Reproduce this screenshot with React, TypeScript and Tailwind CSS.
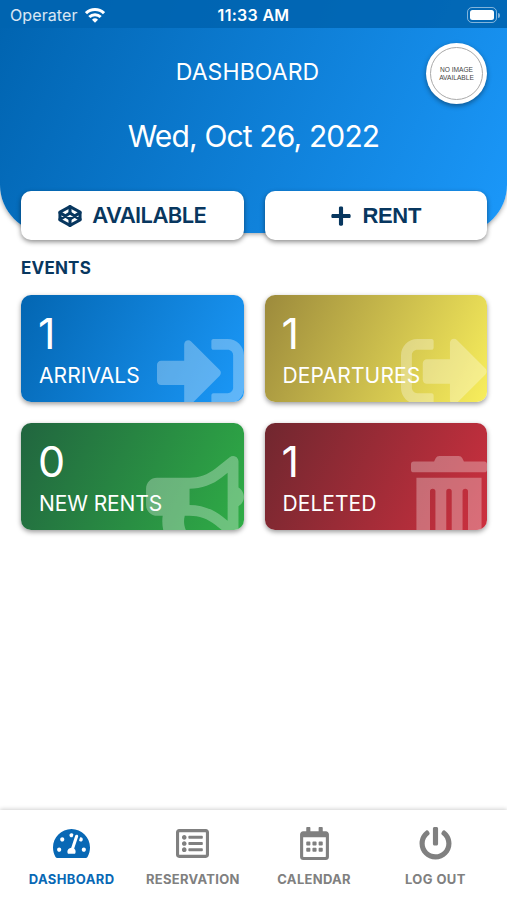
import type { IconType } from 'react-icons';
import {
  FaBullhorn,
  FaPlus,
  FaPowerOff,
  FaRegCalendarAlt,
  FaRegListAlt,
  FaSignInAlt,
  FaSignOutAlt,
  FaTachometerAlt,
  FaTrashAlt,
} from 'react-icons/fa';

interface EventCard {
  label: string;
  count: number;
  icon: IconType;
  iconClass: string;
  gradient: string;
  labelClass: string;
}

interface Tab {
  label: string;
  icon: IconType;
  iconClass: string;
  labelClass: string;
  active?: boolean;
}

const events: EventCard[] = [
  {
    label: 'ARRIVALS',
    count: 1,
    icon: FaSignInAlt,
    iconClass: 'w-[87px]',
    gradient: 'from-[#0366b2] to-[#1b98f8]',
    labelClass: 'tracking-[0.1px]',
  },
  {
    label: 'DEPARTURES',
    count: 1,
    icon: FaSignOutAlt,
    iconClass: 'w-[87px] translate-x-px',
    gradient: 'from-[#9c8a3c] to-[#f8ee5c]',
    labelClass: 'tracking-[0.15px]',
  },
  {
    label: 'NEW RENTS',
    count: 0,
    icon: FaBullhorn,
    iconClass: 'w-[98px]',
    gradient: 'from-[#21653f] to-[#2fad46]',
    labelClass: 'tracking-[-0.1px]',
  },
  {
    label: 'DELETED',
    count: 1,
    icon: FaTrashAlt,
    iconClass: 'w-[76px]',
    gradient: 'from-[#70272f] to-[#cd303f]',
    labelClass: 'tracking-[0.05px]',
  },
];

const tabs: Tab[] = [
  { label: 'DASHBOARD', icon: FaTachometerAlt, iconClass: 'h-[33px] w-[37px]', labelClass: 'tracking-[0.4px]', active: true },
  { label: 'RESERVATION', icon: FaRegListAlt, iconClass: 'size-[33px]', labelClass: 'tracking-[0.3px]' },
  { label: 'CALENDAR', icon: FaRegCalendarAlt, iconClass: 'size-[33px]', labelClass: 'tracking-[0.3px]' },
  { label: 'LOG OUT', icon: FaPowerOff, iconClass: 'size-[33px]', labelClass: 'tracking-[0.4px]' },
];

function CodepenIcon({ className }: { className?: string }) {
  return (
    <svg
      viewBox="0 0 24 24"
      className={className}
      fill="none"
      stroke="currentColor"
      strokeWidth="3.1"
      strokeLinecap="round"
      strokeLinejoin="round"
    >
      <path d="M12 2.6 22 8v8l-10 5.4L2 16V8Z" />
      <path d="M12 2.6v6M12 15.4v6" />
      <path d="m2 8.6 10 6.4 10-6.4M2 15.4 12 9l10 6.4" />
    </svg>
  );
}

function StatusBar() {
  return (
    <div className="grid h-7 grid-cols-3 items-center bg-[#0064b0]/90 pt-0.5 text-[16px] text-white">
      <div className="flex items-center gap-[7px] pl-[10px]">
        <span className="tracking-[0.1px] text-white/85">Operater</span>
        <svg viewBox="0 0 20 15" className="h-[15px] w-5" fill="none" stroke="white" strokeWidth="3">
          <path d="M1 5.2a12.8 12.8 0 0 1 18 0" />
          <path d="M4.3 9a8.1 8.1 0 0 1 11.4 0" />
          <path d="M10 14.8 7 11.8a4.3 4.3 0 0 1 6 0Z" fill="white" stroke="none" />
        </svg>
      </div>
      <span className="text-center font-semibold tracking-[0.3px] whitespace-nowrap">11:33 AM</span>
      <div className="flex items-center justify-end gap-px pr-[7px]">
        <div className="h-4 w-[30px] rounded-[5px] border border-white/50 p-[2px]">
          <div className="h-full rounded-[2.5px] bg-white" />
        </div>
        <div className="h-[5px] w-[2px] rounded-r bg-white/50" />
      </div>
    </div>
  );
}

function Header() {
  return (
    <header className="h-[233px] rounded-b-[48px] bg-linear-[115deg] from-[#0063af] to-[#1b98fa] shadow-[0_1px_5px_rgba(0,0,0,0.4)]">
      <StatusBar />
      <div className="grid grid-cols-[1fr_auto_1fr] items-center pt-[15px] pr-5">
        <h1 className="col-start-2 pb-[3px] pl-2 text-[23px] leading-8 tracking-[0.1px] text-white">DASHBOARD</h1>
        <div className="flex size-[61px] items-center justify-center justify-self-end rounded-full bg-white shadow-[0_2px_5px_rgba(0,0,0,0.4)]">
          <div className="flex size-[53px] items-center justify-center rounded-full border border-[#aaa] pt-px text-center font-['Liberation_Sans',sans-serif] text-[6.6px] leading-[8px] text-[#444]">
            NO IMAGE
            <br />
            AVAILABLE
          </div>
        </div>
      </div>
      <p className="mt-[12px] text-center text-[30px] leading-10 tracking-[-0.85px] text-white">Wed, Oct 26, 2022</p>
    </header>
  );
}

function Events() {
  return (
    <section className="pt-[19px] pr-5 pl-[21px]">
      <h2 className="text-[17px] leading-[18px] font-bold tracking-[0.2px] text-[#08375f]">EVENTS</h2>
      <div className="mt-[18px] grid grid-cols-2 gap-[21px]">
        {events.map(({ label, count, icon: Icon, iconClass, gradient, labelClass }) => (
          <div
            key={label}
            className={`relative h-[107px] rounded-[10px] bg-linear-[116deg] shadow-[0_2px_5px_rgba(0,0,0,0.4)] ${gradient}`}
          >
            <div className="absolute inset-0 overflow-hidden rounded-[10px]">
              <Icon className={`absolute top-[33px] right-0 h-[87px] text-white/30 ${iconClass}`} />
            </div>
            <div className="relative pt-[13px] pl-[18px] text-white">
              <div className="-ml-px text-[43px] leading-[50px]">{count}</div>
              <div className={`mt-1 text-[21px] leading-7 ${labelClass}`}>{label}</div>
            </div>
          </div>
        ))}
      </div>
    </section>
  );
}

function TabBar() {
  return (
    <nav className="mt-auto grid h-[90px] grid-cols-4 px-[11px] pt-[17px] shadow-[0_-1px_4px_rgba(0,0,0,0.18)]">
      {tabs.map(({ label, icon: Icon, iconClass, labelClass, active }) => (
        <button
          key={label}
          className={`flex flex-col items-center gap-[11px] ${active ? 'text-[#0868b5]' : 'text-[#808080]'}`}
        >
          <Icon className={iconClass} />
          <span className={`text-[13px] leading-4 font-bold whitespace-nowrap ${labelClass}`}>{label}</span>
        </button>
      ))}
    </nav>
  );
}

function App() {
  return (
    <div className="flex h-[900px] w-[507px] flex-col overflow-hidden bg-white font-['Inter',sans-serif]">
      <Header />
      <div className="relative -mt-[42px] grid grid-cols-2 gap-[21px] pr-5 pl-[21px] text-[#08375f]">
        <button className="flex h-[49px] items-center justify-center gap-[10px] rounded-[10px] bg-white shadow-[0_2px_5px_rgba(0,0,0,0.45)]">
          <CodepenIcon className="size-6" />
          <span className="text-[22px] font-semibold tracking-[-0.6px]">AVAILABLE</span>
        </button>
        <button className="flex h-[49px] items-center justify-center gap-[10px] rounded-[10px] bg-white shadow-[0_2px_5px_rgba(0,0,0,0.45)]">
          <FaPlus className="size-[22px]" />
          <span className="font-['Liberation_Sans',sans-serif] text-[22px] font-bold tracking-[-0.3px]">RENT</span>
        </button>
      </div>
      <Events />
      <TabBar />
    </div>
  );
}

export default App;
